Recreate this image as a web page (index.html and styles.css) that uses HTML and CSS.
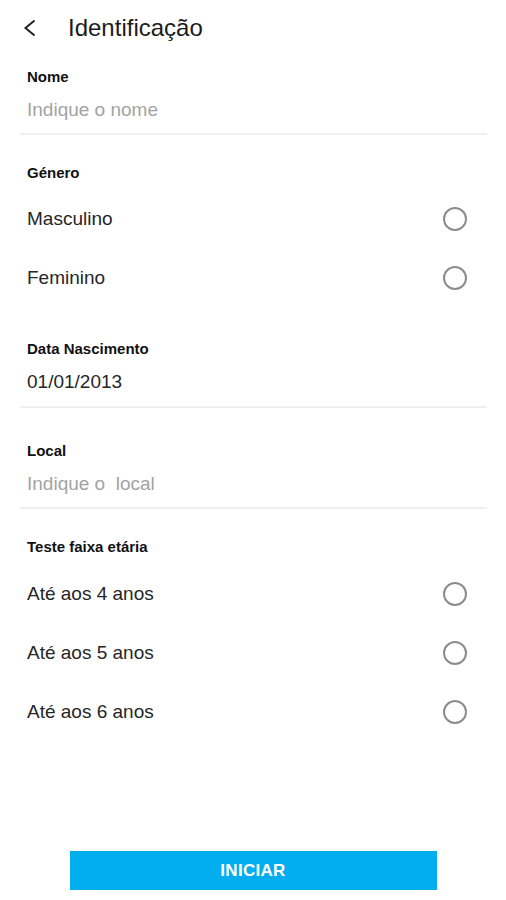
FILE: index.html
```html
<!DOCTYPE html>
<html lang="pt">
<head>
    <meta charset="UTF-8">
    <meta name="viewport" content="width=device-width, initial-scale=1.0">
    <title>Identificação</title>
    <link rel="stylesheet" href="styles.css">
</head>
<body>
    <div class="page">
        <header class="topbar">
            <button class="back-btn" aria-label="Voltar">
                <svg width="14" height="20" viewBox="0 0 14 20">
                    <polyline points="11.5,2.5 2.5,10 11.5,17.5" fill="none" stroke="#222" stroke-width="2"/>
                </svg>
            </button>
            <h1>Identificação</h1>
        </header>

        <div class="form">
            <div class="field">
                <label class="field-label">Nome</label>
                <div class="field-value placeholder">Indique o nome</div>
            </div>

            <div class="group">
                <div class="field-label">Género</div>
                <div class="option">
                    <span>Masculino</span>
                    <span class="radio"></span>
                </div>
                <div class="option">
                    <span>Feminino</span>
                    <span class="radio"></span>
                </div>
            </div>

            <div class="field field-date">
                <label class="field-label">Data Nascimento</label>
                <div class="field-value">01/01/2013</div>
            </div>

            <div class="field field-local">
                <label class="field-label">Local</label>
                <div class="field-value placeholder">Indique o &nbsp;local</div>
            </div>

            <div class="group group-age">
                <div class="field-label">Teste faixa etária</div>
                <div class="option">
                    <span>Até aos 4 anos</span>
                    <span class="radio"></span>
                </div>
                <div class="option">
                    <span>Até aos 5 anos</span>
                    <span class="radio"></span>
                </div>
                <div class="option">
                    <span>Até aos 6 anos</span>
                    <span class="radio"></span>
                </div>
            </div>
        </div>

        <button class="start-btn">INICIAR</button>
    </div>
</body>
</html>
```

FILE: styles.css
```css
body {
    font-family: "Liberation Sans", Arial, sans-serif;
    margin: 0;
    padding: 0;
    background-color: #fff;
    color: #222;
}
.page {
    height: 900px;
    display: flex;
    flex-direction: column;
}
.topbar {
    height: 56px;
    display: flex;
    align-items: center;
}
.back-btn {
    background: none;
    border: none;
    padding: 0;
    margin-left: 23px;
    width: 14px;
    height: 20px;
    display: flex;
    cursor: pointer;
}
h1 {
    margin: 0 0 0 31px;
    font-size: 24px;
    font-weight: normal;
    color: #1c1c1c;
    line-height: 28px;
}
.form {
    padding: 0 19px 0 20px;
}
.field {
    padding: 11px 0 10px 7px;
    border-bottom: 2px solid #efefef;
}
.field-label {
    display: block;
    font-size: 15px;
    font-weight: bold;
    line-height: 20px;
    color: #111;
}
.field-value {
    margin-top: 10px;
    font-size: 19px;
    line-height: 26px;
    color: #262626;
}
.field-value.placeholder {
    color: #a3a3a3;
}
.field-date {
    padding-top: 32px;
    padding-bottom: 11px;
}
.field-local {
    padding-top: 33px;
}
.group {
    padding: 28px 0 0 7px;
}
.group .field-label {
    margin-bottom: 6px;
}
.option {
    height: 59px;
    display: flex;
    align-items: center;
    justify-content: space-between;
    padding-right: 20px;
    font-size: 19px;
    color: #262626;
}
.radio {
    width: 20px;
    height: 20px;
    border: 2px solid #8c8c8c;
    border-radius: 50%;
}
.group-age .field-label {
    margin-bottom: 7px;
}
.start-btn {
    margin: auto auto 10px;
    width: 367px;
    height: 39px;
    background-color: #03aeef;
    color: #fff;
    border: none;
    font-family: "Liberation Sans", Arial, sans-serif;
    font-size: 17px;
    font-weight: bold;
    letter-spacing: 0.3px;
    cursor: pointer;
}
```
